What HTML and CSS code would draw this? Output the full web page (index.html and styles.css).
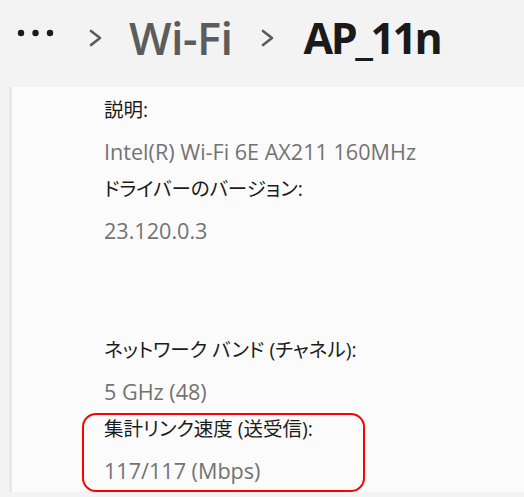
FILE: index.html
```html
<!DOCTYPE html>
<html lang="ja">
<head>
<meta charset="utf-8">
<link rel="stylesheet" href="styles.css">
</head>
<body>
<header class="crumbs">
  <svg class="more" width="37" height="8" viewBox="0 0 37 8"><circle cx="4" cy="4" r="3.2"/><circle cx="18.5" cy="4" r="3.2"/><circle cx="33" cy="4" r="3.2"/></svg>
  <svg class="chev chev-first" width="13" height="18" viewBox="0 0 13 18"><polyline points="2,2 11,9 2,16"/></svg>
  <span class="crumb">Wi-Fi</span>
  <svg class="chev chev-second" width="13" height="18" viewBox="0 0 13 18"><polyline points="2,2 11,9 2,16"/></svg>
  <span class="current">AP_11n</span>
</header>
<main class="card">
  <div class="field">
    <div class="label">説明:</div>
    <div class="value">Intel(R) Wi-Fi 6E AX211 160MHz</div>
  </div>
  <div class="field">
    <div class="label">ドライバーのバージョン:</div>
    <div class="value">23.120.0.3</div>
  </div>
  <div class="field field-group">
    <div class="label">ネットワーク バンド (チャネル):</div>
    <div class="value">5 GHz (48)</div>
  </div>
  <div class="field highlight">
    <div class="label">集計リンク速度 (送受信):</div>
    <div class="value">117/117 (Mbps)</div>
  </div>
</main>
</body>
</html>
```
FILE: styles.css
```css
html, body {
  margin: 0;
  padding: 0;
}
body {
  width: 524px;
  height: 497px;
  overflow: hidden;
  background: #f3f3f3;
  font-family: "Open Sans", "Noto Sans CJK JP", sans-serif;
}
.crumbs {
  height: 87px;
  box-sizing: border-box;
  display: flex;
  align-items: center;
  padding: 0 0 12px 17px;
}
.more {
  fill: #1a1a1a;
  margin-top: -10px;
}
.chev {
  fill: none;
  stroke: #5a5a5a;
  stroke-width: 2.6;
  stroke-linecap: round;
  stroke-linejoin: round;
}
.chev-first {
  margin-left: 35px;
}
.chev-second {
  margin-left: 28px;
}
.crumb {
  margin-left: 27px;
  font-size: 45px;
  font-weight: 600;
  color: #5c5c5c;
  letter-spacing: -0.5px;
  line-height: 1;
}
.current {
  margin-left: 30px;
  font-size: 43px;
  font-weight: 700;
  color: #1a1a1a;
  letter-spacing: -2.5px;
  line-height: 1;
}
.card {
  margin-left: 9px;
  width: 540px;
  height: 405px;
  box-sizing: border-box;
  overflow: hidden;
  background: #fbfbfb;
  border-left: 3px solid #e8e8e8;
  padding: 11px 0 0 92px;
}
.field + .field {
  margin-top: 13px;
}
.label {
  font-size: 19.5px;
  line-height: 24px;
  color: #1b1b1b;
  font-feature-settings: "palt";
}
.value {
  margin-top: 18px;
  font-size: 21.6px;
  line-height: 24px;
  color: #737373;
}
.field.field-group {
  margin-top: 95px;
}
.field.highlight {
  margin-top: 9px;
  margin-left: -22px;
  width: 283px;
  box-sizing: border-box;
  border: 2px solid #ff0000;
  border-radius: 14px;
  padding: 2px 0 7px 20px;
}
```
